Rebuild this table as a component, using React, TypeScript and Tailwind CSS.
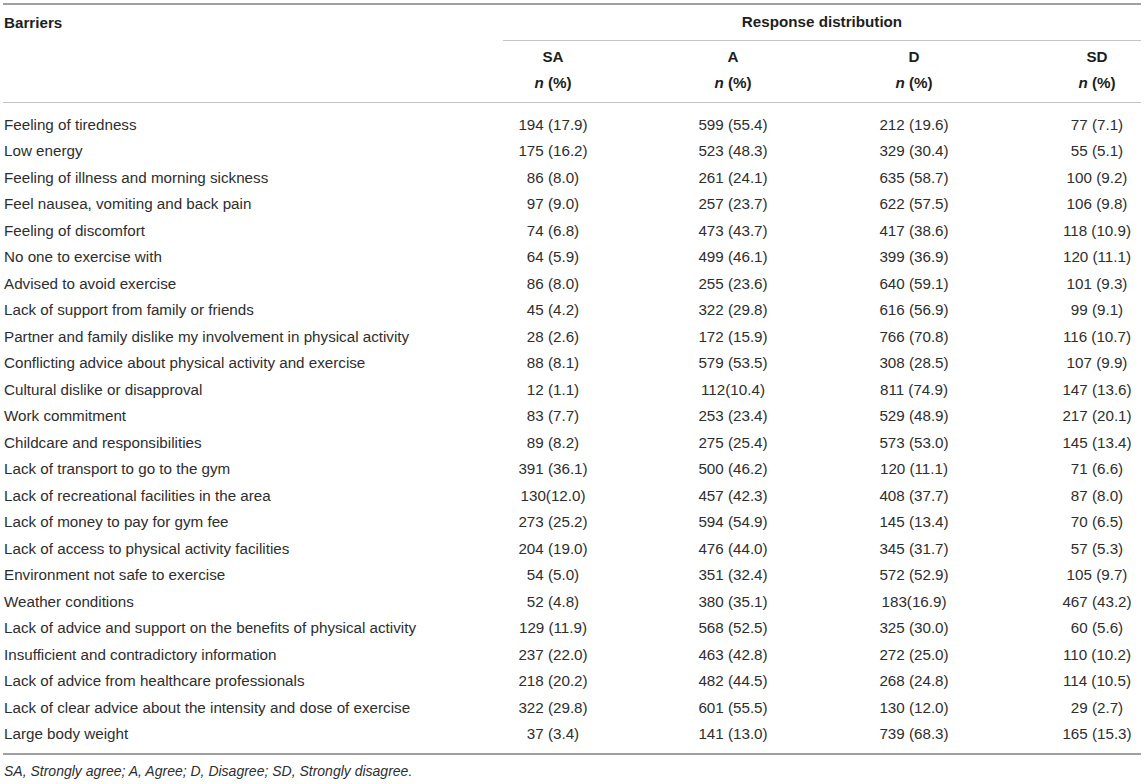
const rows: [string, string, string, string, string][] = [
  ["Feeling of tiredness", "194 (17.9)", "599 (55.4)", "212 (19.6)", "77 (7.1)"],
  ["Low energy", "175 (16.2)", "523 (48.3)", "329 (30.4)", "55 (5.1)"],
  ["Feeling of illness and morning sickness", "86 (8.0)", "261 (24.1)", "635 (58.7)", "100 (9.2)"],
  ["Feel nausea, vomiting and back pain", "97 (9.0)", "257 (23.7)", "622 (57.5)", "106 (9.8)"],
  ["Feeling of discomfort", "74 (6.8)", "473 (43.7)", "417 (38.6)", "118 (10.9)"],
  ["No one to exercise with", "64 (5.9)", "499 (46.1)", "399 (36.9)", "120 (11.1)"],
  ["Advised to avoid exercise", "86 (8.0)", "255 (23.6)", "640 (59.1)", "101 (9.3)"],
  ["Lack of support from family or friends", "45 (4.2)", "322 (29.8)", "616 (56.9)", "99 (9.1)"],
  ["Partner and family dislike my involvement in physical activity", "28 (2.6)", "172 (15.9)", "766 (70.8)", "116 (10.7)"],
  ["Conflicting advice about physical activity and exercise", "88 (8.1)", "579 (53.5)", "308 (28.5)", "107 (9.9)"],
  ["Cultural dislike or disapproval", "12 (1.1)", "112(10.4)", "811 (74.9)", "147 (13.6)"],
  ["Work commitment", "83 (7.7)", "253 (23.4)", "529 (48.9)", "217 (20.1)"],
  ["Childcare and responsibilities", "89 (8.2)", "275 (25.4)", "573 (53.0)", "145 (13.4)"],
  ["Lack of transport to go to the gym", "391 (36.1)", "500 (46.2)", "120 (11.1)", "71 (6.6)"],
  ["Lack of recreational facilities in the area", "130(12.0)", "457 (42.3)", "408 (37.7)", "87 (8.0)"],
  ["Lack of money to pay for gym fee", "273 (25.2)", "594 (54.9)", "145 (13.4)", "70 (6.5)"],
  ["Lack of access to physical activity facilities", "204 (19.0)", "476 (44.0)", "345 (31.7)", "57 (5.3)"],
  ["Environment not safe to exercise", "54 (5.0)", "351 (32.4)", "572 (52.9)", "105 (9.7)"],
  ["Weather conditions", "52 (4.8)", "380 (35.1)", "183(16.9)", "467 (43.2)"],
  ["Lack of advice and support on the benefits of physical activity", "129 (11.9)", "568 (52.5)", "325 (30.0)", "60 (5.6)"],
  ["Insufficient and contradictory information", "237 (22.0)", "463 (42.8)", "272 (25.0)", "110 (10.2)"],
  ["Lack of advice from healthcare professionals", "218 (20.2)", "482 (44.5)", "268 (24.8)", "114 (10.5)"],
  ["Lack of clear advice about the intensity and dose of exercise", "322 (29.8)", "601 (55.5)", "130 (12.0)", "29 (2.7)"],
  ["Large body weight", "37 (3.4)", "141 (13.0)", "739 (68.3)", "165 (15.3)"],
];

const heads = ["SA", "A", "D", "SD"];

const grid = "grid grid-cols-[460px_180px_180px_182px_136px]";

export default function App() {
  return (
    <div className="w-[1145px] h-[784px] bg-white font-['Liberation_Sans',Arial,sans-serif] text-[15.2px] text-[#2e2e2e]">
      <div className="ml-[3px] w-[1138px] pt-[3px]">
        <div className="border-t-2 border-[#a0a0a0]">
          <div className="flex h-[36px] items-center">
            <div className="w-[500px] pl-[1px] font-bold text-[#1e1e1e]">Barriers</div>
            <div className="flex-1 h-full flex items-center justify-center font-bold text-[#1e1e1e] border-b border-[#c4c4c4]">
              Response distribution
            </div>
          </div>
          <div className={`${grid} h-[62px] border-b border-[#c4c4c4] pt-[3px]`}>
            <div />
            {heads.map((h, i) => (
              <div key={h} className={`text-center leading-[26px] text-[#1e1e1e] ${i === 3 ? "pl-[48px]" : ""}`}>
                <div className="font-bold">{h}</div>
                <div className="font-bold"><span className="italic">n</span> (%)</div>
              </div>
            ))}
          </div>
          <div className="pt-[9px] pb-[5px] border-b-2 border-[#a0a0a0]">
            {rows.map((r) => (
              <div key={r[0]} className={`${grid} h-[26.5px] items-center`}>
                <div className="pl-[1px] whitespace-nowrap">{r[0]}</div>
                <div className="text-center">{r[1]}</div>
                <div className="text-center">{r[2]}</div>
                <div className="text-center">{r[3]}</div>
                <div className="text-center pl-[48px]">{r[4]}</div>
              </div>
            ))}
          </div>
          <div className="pt-[6px] pl-[1px] italic text-[14px] leading-[20px]">
            SA, Strongly agree; A, Agree; D, Disagree; SD, Strongly disagree.
          </div>
        </div>
      </div>
    </div>
  );
}
